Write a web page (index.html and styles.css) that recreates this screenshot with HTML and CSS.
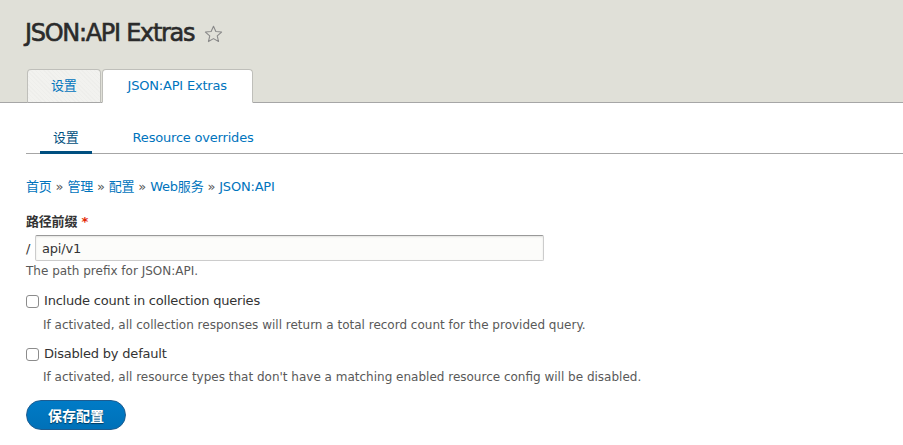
FILE: index.html
```html
<!DOCTYPE html>
<html lang="zh-CN">
<head>
<meta charset="utf-8">
<title>JSON:API Extras</title>
<link rel="stylesheet" href="styles.css">
</head>
<body>
<header class="page-header">
  <h1 class="page-title">JSON:API Extras <svg class="star" width="19" height="18" viewBox="0 0 19 18"><path d="M9.5 1.2l2.35 5.3 5.75.55-4.35 3.85 1.3 5.65L9.5 13.6l-5.05 2.95 1.3-5.65L1.4 7.05l5.75-.55z" fill="none" stroke="#8a8a8a" stroke-width="1.1" stroke-linejoin="round"/></svg></h1>
  <ul class="tabs">
    <li class="tab"><a href="#">设置</a></li>
    <li class="tab active"><a href="#">JSON:API Extras</a></li>
  </ul>
</header>
<main class="content">
  <ul class="subtabs">
    <li class="subtab active"><a href="#">设置</a></li>
    <li class="subtab"><a href="#">Resource overrides</a></li>
  </ul>
  <nav class="breadcrumb">
    <a href="#">首页</a><span class="sep">»</span><a href="#">管理</a><span class="sep">»</span><a href="#">配置</a><span class="sep">»</span><a href="#">Web服务</a><span class="sep">»</span><a href="#">JSON:API</a>
  </nav>
  <form class="form">
    <div class="item">
      <label class="label">路径前缀 <span class="req">*</span></label>
      <div class="field-row">
        <span class="prefix">/</span>
        <input class="text" type="text" value="api/v1">
      </div>
      <div class="desc">The path prefix for JSON:API.</div>
    </div>
    <div class="item check-item">
      <label class="check"><input type="checkbox" class="cb"><span>Include count in collection queries</span></label>
      <div class="desc indent">If activated, all collection responses will return a total record count for the provided query.</div>
    </div>
    <div class="item check-item second">
      <label class="check"><input type="checkbox" class="cb"><span>Disabled by default</span></label>
      <div class="desc indent tight">If activated, all resource types that don't have a matching enabled resource config will be disabled.</div>
    </div>
    <div class="actions">
      <button type="button" class="button">保存配置</button>
    </div>
  </form>
</main>
</body>
</html>
```
FILE: styles.css
```css
html, body {
  margin: 0;
  padding: 0;
  background: #fff;
}
body {
  font-family: "DejaVu Sans", "Noto Sans CJK SC", sans-serif;
  font-size: 13px;
  color: #333;
  letter-spacing: -0.2px;
}
a {
  color: #0074bd;
  text-decoration: none;
}
.page-header {
  background: #e0e0d8;
  border-bottom: 1px solid #a6a6a6;
  padding: 19px 0 0 25px;
}
.page-title {
  margin: 0 0 21px;
  font-size: 24px;
  line-height: 29px;
  font-weight: normal;
  letter-spacing: -1.3px;
  color: #2b2b2b;
  -webkit-text-stroke: 0.6px #2b2b2b;
  display: flex;
  align-items: center;
}
.star {
  margin-left: 10px;
  margin-top: 1px;
}
.tabs {
  list-style: none;
  margin: 0 0 -1px 2px;
  padding: 0;
  display: flex;
  gap: 1px;
}
.tab a {
  display: block;
  padding: 0 23px;
  border: 1px solid #bfbfba;
  border-bottom-color: #a6a6a6;
  border-radius: 4px 4px 0 0;
  background-color: #f2f2ef;
  background-image: repeating-linear-gradient(45deg, rgba(0,0,0,0.015) 0 1px, transparent 1px 3px);
  box-sizing: border-box;
  height: 34px;
  line-height: 32px;
}
.tab.active a {
  background: #fff;
  border-bottom-color: #fff;
  padding: 0 25px;
}
.content {
  padding: 20px 0 8px 26px;
}
.subtabs {
  list-style: none;
  margin: 0;
  padding: 0 0 0 14px;
  display: flex;
  gap: 28px;
  border-bottom: 1px solid #a6a6a6;
}
.subtab a {
  display: block;
  padding: 7px 13px 5px;
  line-height: 16px;
  border-bottom: 3px solid transparent;
  margin-bottom: -1px;
}
.subtab.active a {
  border-bottom-color: #004f80;
  color: #004f80;
}
.breadcrumb {
  margin-top: 25px;
  line-height: 16px;
}
.breadcrumb .sep {
  color: #555;
  margin: 0 4px;
}
.form {
  margin: 0;
}
.label {
  display: block;
  margin-top: 19px;
  line-height: 16px;
  font-weight: bold;
  color: #333;
}
.req {
  color: #e32700;
}
.field-row {
  display: flex;
  align-items: center;
  margin-top: 5px;
}
.prefix {
  width: 9px;
  color: #333;
}
.text {
  width: 509px;
  height: 26px;
  box-sizing: border-box;
  border: 1px solid #ccc;
  border-top-color: #999;
  border-radius: 2px;
  background: #fcfcfa;
  box-shadow: inset 0 1px 2px rgba(0,0,0,0.1);
  padding: 0 6px;
  font-family: "DejaVu Sans", sans-serif;
  font-size: 13px;
  color: #333;
  letter-spacing: -0.2px;
}
.desc {
  margin-top: 3px;
  font-size: 12px;
  line-height: 14px;
  color: #595959;
  letter-spacing: 0;
}
.indent {
  padding-left: 17px;
  margin-top: 9px;
}
.indent.tight {
  margin-top: 8px;
}
.check-item {
  margin-top: 15px;
}
.check-item.second {
  margin-top: 14px;
}
.check {
  display: flex;
  align-items: center;
  line-height: 16px;
}
.cb {
  -webkit-appearance: none;
  appearance: none;
  margin: 0 5px 0 0;
  width: 13px;
  height: 13px;
  border: 1px solid #8c8c8c;
  border-radius: 3px;
  background: #fff;
  box-sizing: border-box;
}
.actions {
  margin-top: 16px;
}
.button {
  width: 100px;
  height: 30px;
  border: 1px solid #1e5c90;
  border-radius: 20px;
  background: linear-gradient(to bottom, #007bc6, #0071b8);
  color: #fff;
  font-family: "DejaVu Sans", "Noto Sans CJK SC", sans-serif;
  font-size: 14px;
  font-weight: bold;
  text-shadow: 0 1px 1px rgba(0,0,0,0.5);
  padding: 0;
  cursor: pointer;
}
```
